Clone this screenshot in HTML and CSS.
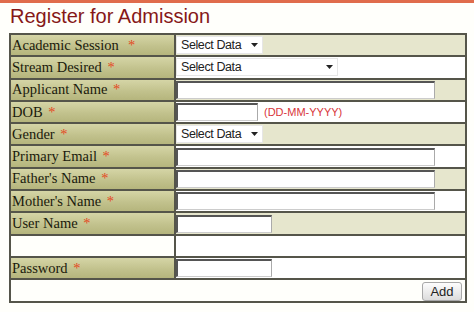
FILE: index.html
```html
<!DOCTYPE html>
<html>
<head>
<meta charset="utf-8">
<link rel="stylesheet" href="styles.css">
</head>
<body>
<div class="topbar"></div>
<h1 class="title">Register for Admission</h1>
<table class="form">
  <tr class="alt">
    <td class="lbl">Academic Session &nbsp;<span class="req">*</span></td>
    <td class="fld"><span class="sel w87"><select><option>Select Data</option></select><svg class="arr" width="7" height="4" viewBox="0 0 7 4"><path d="M0 0H7L3.5 4Z" fill="#222"/></svg></span></td>
  </tr>
  <tr>
    <td class="lbl">Stream Desired <span class="req">*</span></td>
    <td class="fld"><span class="sel w162"><select><option>Select Data</option></select><svg class="arr" width="7" height="4" viewBox="0 0 7 4"><path d="M0 0H7L3.5 4Z" fill="#222"/></svg></span></td>
  </tr>
  <tr class="alt">
    <td class="lbl">Applicant Name <span class="req">*</span></td>
    <td class="fld"><input class="txt long" type="text"></td>
  </tr>
  <tr>
    <td class="lbl">DOB <span class="req">*</span></td>
    <td class="fld"><input class="txt dob" type="text"><span class="hint">(DD-MM-YYYY)</span></td>
  </tr>
  <tr class="alt">
    <td class="lbl">Gender <span class="req">*</span></td>
    <td class="fld"><span class="sel w87"><select><option>Select Data</option></select><svg class="arr" width="7" height="4" viewBox="0 0 7 4"><path d="M0 0H7L3.5 4Z" fill="#222"/></svg></span></td>
  </tr>
  <tr>
    <td class="lbl">Primary Email <span class="req">*</span></td>
    <td class="fld"><input class="txt long" type="text"></td>
  </tr>
  <tr class="alt">
    <td class="lbl">Father's Name <span class="req">*</span></td>
    <td class="fld"><input class="txt long" type="text"></td>
  </tr>
  <tr>
    <td class="lbl">Mother's Name <span class="req">*</span></td>
    <td class="fld"><input class="txt long" type="text"></td>
  </tr>
  <tr class="alt">
    <td class="lbl">User Name <span class="req">*</span></td>
    <td class="fld"><input class="txt short" type="text"></td>
  </tr>
  <tr>
    <td class="blank"></td>
    <td class="fld"></td>
  </tr>
  <tr>
    <td class="lbl">Password <span class="req">*</span></td>
    <td class="fld"><input class="txt short" type="password"></td>
  </tr>
  <tr>
    <td class="foot" colspan="2"><button class="btn" type="button">Add</button></td>
  </tr>
</table>
</body>
</html>
```
FILE: styles.css
```css
html, body {
  margin: 0;
  padding: 0;
  background: #fffffb;
}
.topbar {
  height: 3px;
  background: #e06c4c;
}
.title {
  margin: 0 0 0 10px;
  height: 30px;
  line-height: 27px;
  font-family: "Liberation Sans", Arial, sans-serif;
  font-weight: normal;
  font-size: 20px;
  color: #861818;
}
.form {
  margin-left: 9px;
  border-collapse: collapse;
  width: 458px;
  border: 2px solid #55554a;
}
.form td {
  border: 2px solid #55554a;
  height: 20.3px;
  padding: 0;
  vertical-align: middle;
}
.lbl {
  width: 162px;
  padding-left: 1px !important;
  font-family: "Liberation Serif", "Times New Roman", serif;
  font-size: 14.5px;
  color: #1a1a0c;
  background: linear-gradient(#d5d5a6, #c2c28d 55%, #b5b57d);
  white-space: nowrap;
}
.req {
  color: #e4481f;
  margin-left: 2px;
}
.fld {
  background: #ffffff;
  padding-left: 0;
  font-size: 0;
}
.alt .fld {
  background: #e6e6cd;
}
.blank {
  background: #fffffb;
}
.txt {
  box-sizing: border-box;
  height: 18px;
  margin: 0;
  padding: 0 2px;
  border-style: solid;
  border-width: 2px 1px 1px 2px;
  border-color: #555 #aaa #ccc #555;
  background: #fff;
  vertical-align: middle;
}
.long { width: 259px; }
.dob { width: 82px; }
.short { width: 96px; }
.hint {
  font-family: "Liberation Sans", Arial, sans-serif;
  font-size: 11px;
  color: #d8343a;
  margin-left: 6px;
  vertical-align: middle;
}
.sel {
  position: relative;
  display: inline-block;
  vertical-align: middle;
}
.sel select {
  appearance: none;
  -webkit-appearance: none;
  box-sizing: border-box;
  height: 18px;
  width: 100%;
  margin: 0;
  padding: 0 0 0 4px;
  border: 1px solid #e6e6e6;
  border-radius: 0;
  background: #fff;
  font-family: "Liberation Sans", Arial, sans-serif;
  font-size: 12.5px;
  letter-spacing: -0.4px;
  color: #222;
}
.w87 { width: 87px; }
.w162 { width: 162px; }
.arr {
  position: absolute;
  right: 5px;
  top: 7px;
}
.foot {
  background: #fffffb;
  text-align: right;
  padding-right: 2px !important;
}
.btn {
  height: 19px;
  width: 40px;
  margin: 1px 1px 0 0;
  padding: 0;
  border: 1px solid #a8a8a8;
  border-radius: 3px;
  background: linear-gradient(#fdfdfd, #dcdcdc);
  font-family: "Liberation Sans", Arial, sans-serif;
  font-size: 13px;
  color: #222;
  vertical-align: middle;
}
```
